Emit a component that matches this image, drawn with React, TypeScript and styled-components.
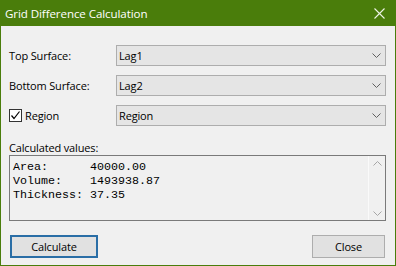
import React from "react";
import styled, { createGlobalStyle } from "styled-components";

const GlobalStyle = createGlobalStyle`
  html, body {
    margin: 0;
    padding: 0;
    background: #f0f0f0;
  }
  * {
    box-sizing: border-box;
  }
`;

const UI_FONT = `"Open Sans", "Noto Sans", "Liberation Sans", sans-serif`;

const Window = styled.div`
  width: 396px;
  height: 266px;
  border: 1px solid #4a7d0b;
  border-top: none;
  background: #f0f0f0;
  display: flex;
  flex-direction: column;
  font-family: ${UI_FONT};
  font-size: 11px;
  letter-spacing: -0.15px;
  color: #000;
`;

const TitleBar = styled.div`
  height: 26px;
  margin: 0 -1px;
  background: #4a7d0b;
  display: flex;
  align-items: center;
  justify-content: space-between;
  padding: 0 0 0 5px;
  color: #fff;
  font-size: 11.6px;
  letter-spacing: -0.1px;
`;

const CloseBox = styled.div`
  width: 34px;
  height: 26px;
  display: flex;
  align-items: center;
  justify-content: center;
`;

const Content = styled.div`
  flex: 1;
  padding: 19px 9px 0 8px;
  display: flex;
  flex-direction: column;
`;

const FormGrid = styled.div`
  display: grid;
  grid-template-columns: 107px 1fr;
  grid-auto-rows: 21px;
  row-gap: 9px;
  align-items: center;
`;

const Label = styled.div`
  white-space: nowrap;
`;

const CheckLabel = styled.label`
  display: flex;
  align-items: center;
  gap: 3px;
`;

const CheckBox = styled.span`
  width: 13px;
  height: 13px;
  border: 1px solid #333;
  background: #fff;
  display: flex;
  align-items: center;
  justify-content: center;
`;

const Combo = styled.div`
  height: 21px;
  border: 1px solid #adadad;
  background: #e5e5e5;
  display: flex;
  align-items: center;
  justify-content: space-between;
  padding: 0 4px 0 2px;
`;

const SectionLabel = styled.div`
  margin-top: 15px;
  height: 14px;
  line-height: 14px;
`;

const Output = styled.div`
  height: 66px;
  border: 1px solid #7a7a7a;
  background: #f0f0f0;
  display: flex;
`;

const OutputText = styled.pre`
  flex: 1;
  margin: 0;
  padding: 4px 3px;
  font-family: "Liberation Mono", "Courier New", monospace;
  font-size: 11.67px;
  line-height: 14px;
  letter-spacing: 0;
`;

const ScrollBar = styled.div`
  width: 17px;
  border-left: 1px solid #fafafa;
  display: flex;
  flex-direction: column;
  justify-content: space-between;
  align-items: center;
  padding: 5px 0 4px;
`;

const ButtonRow = styled.div`
  margin-top: 14px;
  display: flex;
  justify-content: space-between;
  padding: 0 1px 0 1px;
`;

const Button = styled.button<{ $default?: boolean }>`
  height: 23px;
  width: ${(p) => (p.$default ? "88px" : "73px")};
  font-family: ${UI_FONT};
  font-size: 11px;
  letter-spacing: -0.15px;
  color: #000;
  background: #e1e1e1;
  border: ${(p) => (p.$default ? "2px solid #2a6ea6" : "1px solid #adadad")};
  padding: 0;
`;

const Chevron = ({ color = "#606060" }: { color?: string }) => (
  <svg width="9" height="5" viewBox="0 0 9 5">
    <polyline points="0.5,0.5 4.5,4.5 8.5,0.5" fill="none" stroke={color} strokeWidth="1" />
  </svg>
);

const ChevronUp = () => (
  <svg width="9" height="5" viewBox="0 0 9 5">
    <polyline points="0.5,4.5 4.5,0.5 8.5,4.5" fill="none" stroke="#a6a6a6" strokeWidth="1" />
  </svg>
);

const ComboBox = ({ value }: { value: string }) => (
  <Combo>
    <span>{value}</span>
    <Chevron />
  </Combo>
);

export default function App() {
  return (
    <>
      <GlobalStyle />
      <Window>
        <TitleBar>
          <span>Grid Difference Calculation</span>
          <CloseBox>
            <svg width="11" height="11" viewBox="0 0 11 11">
              <path d="M0.5 0.5 L10.5 10.5 M10.5 0.5 L0.5 10.5" stroke="#eef3e6" strokeWidth="1.1" />
            </svg>
          </CloseBox>
        </TitleBar>
        <Content>
          <FormGrid>
            <Label>Top Surface:</Label>
            <ComboBox value="Lag1" />
            <Label>Bottom Surface:</Label>
            <ComboBox value="Lag2" />
            <CheckLabel>
              <CheckBox>
                <svg width="11" height="11" viewBox="0 0 11 11">
                  <polyline points="1.5,5.5 4,8.5 9.5,1.5" fill="none" stroke="#000" strokeWidth="1.2" />
                </svg>
              </CheckBox>
              Region
            </CheckLabel>
            <ComboBox value="Region" />
          </FormGrid>
          <SectionLabel>Calculated values:</SectionLabel>
          <Output>
            <OutputText>{`Area:      40000.00
Volume:    1493938.87
Thickness: 37.35`}</OutputText>
            <ScrollBar>
              <ChevronUp />
              <Chevron color="#a6a6a6" />
            </ScrollBar>
          </Output>
          <ButtonRow>
            <Button $default>Calculate</Button>
            <Button>Close</Button>
          </ButtonRow>
        </Content>
      </Window>
    </>
  );
}
